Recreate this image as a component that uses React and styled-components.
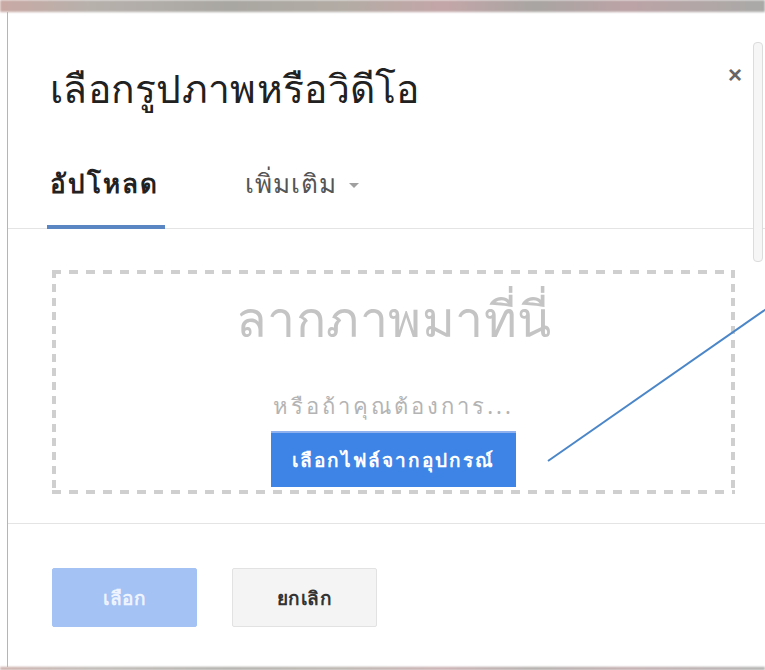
import React from "react";
import styled, { createGlobalStyle } from "styled-components";

const GlobalStyle = createGlobalStyle`
  html, body {
    margin: 0;
    padding: 0;
    background: #ffffff;
  }
  body {
    font-family: "Noto Sans", "Liberation Sans", sans-serif;
  }
`;

const Page = styled.div`
  position: relative;
  width: 765px;
  height: 670px;
  overflow: hidden;
  display: flex;
  flex-direction: column;
  background: #ffffff;
`;

// blurred strip of whatever sits behind the dialog
const Backdrop = styled.div`
  height: ${(props) => props.h}px;
  flex: none;
  background: linear-gradient(
    to right,
    #c9a9a4 0%,
    #b7b1ac 12%,
    #a9a7a2 30%,
    #b3aca5 45%,
    #c4a6a8 58%,
    #a8a5a2 70%,
    #bca3a6 82%,
    #a9aaa7 100%
  );
  filter: blur(1px);
`;

const Dialog = styled.div`
  flex: 1;
  margin-left: 7px;
  border-left: 1px solid #b5b5b5;
  background: #ffffff;
  display: flex;
  flex-direction: column;
`;

const Header = styled.div`
  display: flex;
  justify-content: space-between;
  align-items: flex-start;
  padding: 50px 0 0 42px;
  height: 78px;
`;

const Title = styled.h1`
  margin: 0;
  font-size: 39px;
  font-weight: 400;
  color: #212121;
  line-height: 52px;
  letter-spacing: 0.3px;
`;

const Close = styled.button`
  border: none;
  background: transparent;
  color: #666666;
  font-size: 24px;
  line-height: 24px;
  padding: 0;
  margin: 1px 23px 0 0;
  cursor: pointer;
  font-family: "Liberation Sans", sans-serif;
  font-weight: 700;
`;

const Tabs = styled.div`
  display: flex;
  align-items: flex-end;
  gap: 77px;
  padding-left: 39px;
  height: 88px;
  border-bottom: 1px solid #e4e4e4;
`;

const Tab = styled.div`
  display: flex;
  align-items: center;
  gap: 12px;
  height: 84px;
  padding: 0 6px 0 3px;
  font-size: 26px;
  font-weight: ${(props) => (props.active ? 700 : 400)};
  letter-spacing: ${(props) => (props.active ? 2 : 1)}px;
  color: ${(props) => (props.active ? "#222222" : "#555555")};
  border-bottom: 4px solid ${(props) => (props.active ? "#5b86c4" : "transparent")};
  margin-bottom: -1px;
`;

const Caret = styled.span`
  width: 0;
  height: 0;
  border-left: 5px solid transparent;
  border-right: 5px solid transparent;
  border-top: 5px solid #a0a0a0;
  margin-top: 4px;
`;

const Body = styled.div`
  padding: 41px 30px 0 44px;
  height: 253px;
  border-bottom: 1px solid #e4e4e4;
`;

const DropZone = styled.div`
  height: 224px;
  display: flex;
  flex-direction: column;
  align-items: center;
  background-image: linear-gradient(to right, #cfcfcf 55%, transparent 55%),
    linear-gradient(to right, #cfcfcf 55%, transparent 55%),
    linear-gradient(to bottom, #cfcfcf 55%, transparent 55%),
    linear-gradient(to bottom, #cfcfcf 55%, transparent 55%);
  background-size: 17px 4px, 17px 4px, 4px 14px, 4px 14px;
  background-repeat: repeat-x, repeat-x, repeat-y, repeat-y;
  background-position: left top, left bottom, left top, right top;
`;

const DropText = styled.div`
  margin-top: 16px;
  font-size: 50px;
  color: #c4c4c4;
  line-height: 64px;
  letter-spacing: 0.5px;
`;

const OrText = styled.div`
  margin-top: 41px;
  font-size: 22px;
  color: #b4b4b4;
  line-height: 28px;
  letter-spacing: 3px;
`;

const PickButton = styled.button`
  margin-top: 12px;
  width: 245px;
  height: 56px;
  border: none;
  border-top: 2px solid #8fb2ef;
  background: #3d84e6;
  color: #ffffff;
  font-family: inherit;
  font-size: 19px;
  font-weight: 700;
  letter-spacing: 2px;
  cursor: pointer;
`;

const Footer = styled.div`
  display: flex;
  gap: 35px;
  padding: 44px 0 0 44px;
`;

const FooterButton = styled.button`
  width: 145px;
  height: 59px;
  border-radius: 2px;
  font-family: inherit;
  font-size: 19px;
  font-weight: 700;
  letter-spacing: 0.5px;
  cursor: pointer;
  border: 1px solid ${(props) => (props.primary ? "#a4c2f4" : "#e2e2e2")};
  background: ${(props) => (props.primary ? "#a4c2f4" : "#f4f4f4")};
  color: ${(props) => (props.primary ? "#eef4ff" : "#333333")};
`;

const Scrollbar = styled.div`
  position: absolute;
  right: 2px;
  top: 42px;
  width: 8px;
  height: 218px;
  border: 1px solid #dcdcdc;
  border-radius: 4px;
  background: #f6f6f6;
`;

const Pointer = styled.svg`
  position: absolute;
  left: 0;
  top: 0;
  pointer-events: none;
`;

export default function App() {
  return (
    <>
      <GlobalStyle />
      <Page>
        <Backdrop h={12} />
        <Dialog>
          <Header>
            <Title>เลือกรูปภาพหรือวิดีโอ</Title>
            <Close aria-label="close">×</Close>
          </Header>
          <Tabs>
            <Tab active>อัปโหลด</Tab>
            <Tab>
              เพิ่มเติม
              <Caret />
            </Tab>
          </Tabs>
          <Body>
            <DropZone>
              <DropText>ลากภาพมาที่นี่</DropText>
              <OrText>หรือถ้าคุณต้องการ...</OrText>
              <PickButton>เลือกไฟล์จากอุปกรณ์</PickButton>
            </DropZone>
          </Body>
          <Footer>
            <FooterButton primary>เลือก</FooterButton>
            <FooterButton>ยกเลิก</FooterButton>
          </Footer>
        </Dialog>
        <Backdrop h={3} />
        <Scrollbar />
        <Pointer width="765" height="670">
          <line x1="548" y1="461" x2="772" y2="305" stroke="#4a86c8" strokeWidth="2" />
        </Pointer>
      </Page>
    </>
  );
}
